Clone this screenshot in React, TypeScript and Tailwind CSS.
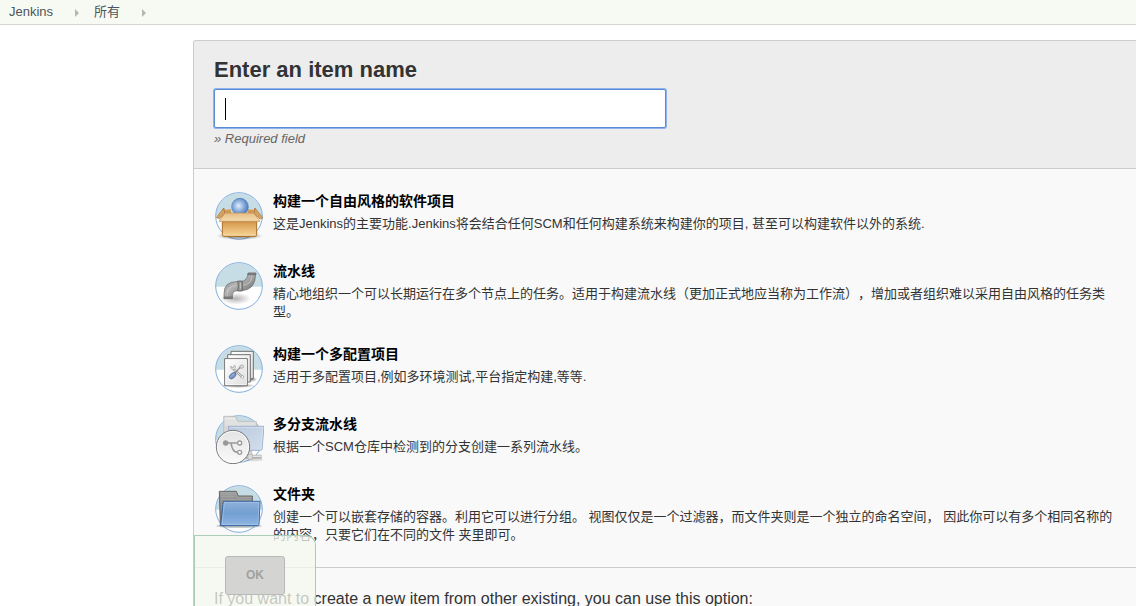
import { useState, type ReactNode } from 'react';

interface ItemType {
  id: string;
  name: string;
  description: string;
  icon: ReactNode;
}

function Disc({ cy, r = 70 }: { cy: number; r?: number }) {
  return (
    <>
      <circle cx="102" cy={cy} r={r} fill="#fff" />
      <path d={`M${102 - r} ${cy + 2}a${r} ${r} 0 0 1 ${r * 2} 0z`} fill="#c6dde5" />
      <circle cx="102" cy={cy} r={r} fill="none" stroke="#82aede" strokeWidth="3" />
    </>
  );
}

function FreestyleIcon() {
  return (
    <svg viewBox="27 33 150 150" className="size-[50px]" aria-hidden="true">
      <defs>
        <radialGradient id="ball" cx=".42" cy=".45" r=".6">
          <stop offset="0" stopColor="#e3eefa" />
          <stop offset=".5" stopColor="#8fb1dd" />
          <stop offset="1" stopColor="#4678b8" />
        </radialGradient>
        <linearGradient id="box" x2="0" y2="1">
          <stop offset="0" stopColor="#c2893f" />
          <stop offset=".3" stopColor="#dda65c" />
          <stop offset="1" stopColor="#f8d596" />
        </linearGradient>
        <linearGradient id="flap" x2="0" y2="1">
          <stop offset="0" stopColor="#e6bd85" />
          <stop offset="1" stopColor="#f6dcb4" />
        </linearGradient>
        <radialGradient id="boxShadow">
          <stop offset="0" stopColor="#000" stopOpacity=".6" />
          <stop offset="1" stopColor="#000" stopOpacity="0" />
        </radialGradient>
      </defs>
      <Disc cy={108} />
      <ellipse cx="104" cy="168" rx="70" ry="12" fill="url(#boxShadow)" />
      <path d="M56 84L34 113l10 3 17-17zM150 84l24 30-9 3-19-17z" fill="#d3a263" stroke="#b17a35" strokeWidth="2" />
      <path d="M56 85l4 14M150 85l-4 14" stroke="#a8712c" strokeWidth="3" />
      <path d="M58 90l20-2v12H60zM148 90l-20-2v12h18z" fill="#d09a59" />
      <circle cx="105" cy="80" r="25" fill="url(#ball)" stroke="#4779b9" strokeWidth="2" />
      <path d="M52 120h103v44q0 5-5 5H57q-5 0-5-5z" fill="url(#box)" stroke="#a96e22" strokeWidth="3" />
      <path d="M60 99h86l19 25H42z" fill="url(#flap)" stroke="#bd8a48" strokeWidth="2" />
      <path d="M55 165h97" stroke="#fff0c9" strokeWidth="2" opacity=".6" />
    </svg>
  );
}

function PipelineIcon() {
  return (
    <svg viewBox="27 33 150 150" className="size-[50px]" aria-hidden="true">
      <defs>
        <linearGradient id="pipe" x1="0" y1="0" x2="1" y2="1">
          <stop offset="0" stopColor="#777" />
          <stop offset=".4" stopColor="#b5b5b5" />
          <stop offset=".65" stopColor="#8f8f8f" />
          <stop offset="1" stopColor="#626262" />
        </linearGradient>
        <radialGradient id="pipeShadow">
          <stop offset="0" stopColor="#000" stopOpacity=".3" />
          <stop offset="1" stopColor="#000" stopOpacity="0" />
        </radialGradient>
      </defs>
      <Disc cy={108} />
      <ellipse cx="92" cy="146" rx="46" ry="18" fill="url(#pipeShadow)" />
      <path
        d="M57 145v-14q0-36 38-36h10q21 0 25-25h22q0 51-43 52H96q-13 0-14 12v11z"
        fill="url(#pipe)"
        stroke="#666"
        strokeWidth="2"
      />
      <path d="M67 140v-9q0-23 28-24M113 106q27-2 28-30" fill="none" stroke="#d2d2d2" strokeWidth="4" opacity=".5" />
      <path d="M129 69h24v5h-25zM57 141h25v5H57z" fill="#858585" stroke="#666" strokeWidth="2" />
      <path d="M98 93h14v30H98q4-15 0-30z" fill="#959595" stroke="#555" strokeWidth="2" />
      <path d="M106 98v18" stroke="#ccc" strokeWidth="3" />
    </svg>
  );
}

function MatrixIcon() {
  return (
    <svg viewBox="27 27 150 150" className="size-[50px]" aria-hidden="true">
      <defs>
        <linearGradient id="sheet" x2="1" y2="1">
          <stop offset="0" stopColor="#fff" />
          <stop offset="1" stopColor="#dedede" />
        </linearGradient>
        <radialGradient id="sheetShadow">
          <stop offset="0" stopColor="#000" stopOpacity=".5" />
          <stop offset="1" stopColor="#000" stopOpacity="0" />
        </radialGradient>
      </defs>
      <Disc cy={102} />
      <ellipse cx="100" cy="152" rx="53" ry="7" fill="url(#sheetShadow)" />
      <ellipse cx="139" cy="133" rx="18" ry="8" fill="url(#sheetShadow)" />
      <path d="M78 49h67v82H78z" fill="url(#sheet)" stroke="#707070" strokeWidth="3" />
      <path d="M68 59h68v82H68z" fill="url(#sheet)" stroke="#707070" strokeWidth="3" />
      <path d="M59 71h68v81H59z" fill="url(#sheet)" stroke="#707070" strokeWidth="3" />
      <path d="M62 74h62v75H62z" fill="none" stroke="#fff" strokeWidth="2" />
      <path d="M84 101l27 24" stroke="#999" strokeWidth="7" strokeLinecap="round" />
      <path d="M84 101l27 24" stroke="#e7e7e7" strokeWidth="3" strokeLinecap="round" />
      <path d="M78 93q-4 9 4 11t9-6-4-7l-1 7-5 1z" fill="#eee" stroke="#999" strokeWidth="2" />
      <circle cx="112" cy="126" r="4" fill="#fff" stroke="#999" strokeWidth="2" />
      <path d="M86 117l20-20" stroke="#909090" strokeWidth="4" />
      <path d="M104 93l7-4 5 4-2 6-7 1z" fill="#ddd" stroke="#999" strokeWidth="2" />
      <ellipse cx="83" cy="122" rx="12" ry="7" transform="rotate(-42 83 122)" fill="#7d98c6" stroke="#405f95" strokeWidth="2" />
      <path d="M77 125l10-9" stroke="#b7c8e5" strokeWidth="2" />
    </svg>
  );
}

function MultibranchIcon() {
  return (
    <svg viewBox="27 27 150 150" className="size-[50px]" aria-hidden="true">
      <defs>
        <linearGradient id="screen" x2="1" y2="1">
          <stop offset="0" stopColor="#b9c9df" />
          <stop offset="1" stopColor="#d3deec" />
        </linearGradient>
        <linearGradient id="badge" x2="0" y2="1">
          <stop offset="0" stopColor="#e3e3e3" />
          <stop offset="1" stopColor="#fafafa" />
        </linearGradient>
      </defs>
      <Disc cy={102} />
      <path d="M56 34h36l7 15h52q4 0 4 4v56H56z" fill="#d8d8d8" stroke="#b5b5b5" strokeWidth="2" />
      <path d="M60 38h30l7 15h54v8H60z" fill="#efefef" />
      <path d="M60 45h32M60 51h34M60 57h92" stroke="#c5c5c5" strokeWidth="2" />
      <ellipse cx="140" cy="164" rx="34" ry="5" fill="#000" opacity=".12" />
      <path d="M128 138h12v12h-12z" fill="#ddd" stroke="#aaa" strokeWidth="2" />
      <path d="M70 64h107l-6 69q-1 3-4 3H78z" fill="url(#screen)" stroke="#9db0cc" strokeWidth="3" />
      <path d="M74 67h99l-4 64" fill="none" stroke="#dde7f4" strokeWidth="2" />
      <path d="M112 155h58" stroke="#999" strokeWidth="11" />
      <path d="M112 154h58" stroke="#e4e4e4" strokeWidth="6" />
      <path d="M129 148h13v15h-13z" fill="#ddd" stroke="#aaa" strokeWidth="2" />
      <circle cx="84" cy="126" r="50" fill="url(#badge)" stroke="#777" strokeWidth="3" />
      <circle cx="84" cy="126" r="47" fill="none" stroke="#fff" strokeWidth="2" />
      <path d="M62 114h36M78 114q4 28 20 28" fill="none" stroke="#999" strokeWidth="5" />
      <circle cx="62" cy="114" r="8" fill="#999" />
      <circle cx="104" cy="114" r="6" fill="#fff" stroke="#999" strokeWidth="4" />
      <circle cx="104" cy="142" r="6" fill="#fff" stroke="#999" strokeWidth="4" />
    </svg>
  );
}

function FolderIcon() {
  return (
    <svg viewBox="27 27 150 150" className="size-[50px]" aria-hidden="true">
      <defs>
        <linearGradient id="folderBack" x2="0" y2="1">
          <stop offset="0" stopColor="#9c9c9c" />
          <stop offset="1" stopColor="#6f6f6f" />
        </linearGradient>
        <linearGradient id="folderFront" x2="0" y2="1">
          <stop offset="0" stopColor="#8fb1db" />
          <stop offset=".5" stopColor="#739fd1" />
          <stop offset="1" stopColor="#8fb5e2" />
        </linearGradient>
      </defs>
      <Disc cy={102} />
      <ellipse cx="102" cy="153" rx="68" ry="6" fill="#000" opacity=".2" />
      <path d="M43 49h51l6 14h42v89H46z" fill="url(#folderBack)" stroke="#666" strokeWidth="3" />
      <path d="M47 53h44l6 14h42M48 59h40M48 65h42M48 73h90M48 81h8M48 89h7M48 97h6M48 105h5" fill="none" stroke="#c2c2c2" strokeWidth="2" opacity=".5" />
      <path d="M55 79h110l-3 69q0 4-4 4H47z" fill="url(#folderFront)" stroke="#3465a4" strokeWidth="3" />
      <path d="M58 82h104l-3 66H51z" fill="none" stroke="#b6cff0" strokeWidth="2" opacity=".8" />
    </svg>
  );
}

const ITEM_TYPES: ItemType[] = [
  {
    id: 'freestyle',
    name: '构建一个自由风格的软件项目',
    description: '这是Jenkins的主要功能.Jenkins将会结合任何SCM和任何构建系统来构建你的项目, 甚至可以构建软件以外的系统.',
    icon: <FreestyleIcon />,
  },
  {
    id: 'pipeline',
    name: '流水线',
    description:
      '精心地组织一个可以长期运行在多个节点上的任务。适用于构建流水线（更加正式地应当称为工作流），增加或者组织难以采用自由风格的任务类型。',
    icon: <PipelineIcon />,
  },
  {
    id: 'matrix',
    name: '构建一个多配置项目',
    description: '适用于多配置项目,例如多环境测试,平台指定构建,等等.',
    icon: <MatrixIcon />,
  },
  {
    id: 'multibranch',
    name: '多分支流水线',
    description: '根据一个SCM仓库中检测到的分支创建一系列流水线。',
    icon: <MultibranchIcon />,
  },
  {
    id: 'folder',
    name: '文件夹',
    description:
      '创建一个可以嵌套存储的容器。利用它可以进行分组。 视图仅仅是一个过滤器，而文件夹则是一个独立的命名空间， 因此你可以有多个相同名称的的内容，只要它们在不同的文件 夹里即可。',
    icon: <FolderIcon />,
  },
];

function Chevron() {
  return (
    <svg viewBox="0 0 4 8" className="mt-px h-2 w-1 fill-[#b5b5b5]" aria-hidden="true">
      <path d="M0 0l4 4-4 4z" />
    </svg>
  );
}

export default function App() {
  const [name, setName] = useState('');

  return (
    <div className="flex h-screen flex-col overflow-hidden bg-white font-['Liberation_Sans','Noto_Sans_CJK_SC',sans-serif] text-[13px] leading-[18px] text-[#333] [text-spacing-trim:space-all]">
      {/* Breadcrumbs */}
      <nav className="flex h-[25px] shrink-0 items-center border-b border-[#d3d7cf] bg-[#f6faf2] pl-[9px] text-[#4d545d]">
        <a href="#jenkins" className="mr-[22px]">Jenkins</a>
        <Chevron />
        <a href="#all" className="mr-[22px] ml-[15px]">所有</a>
        <Chevron />
      </nav>

      <main className="relative mt-[15px] ml-[193px] min-h-0 flex-1">
        <form id="create-item" className="h-full overflow-hidden rounded-tl-[3px] border-t border-l border-[#ccc] bg-[#f9f9f9]" onSubmit={(e) => e.preventDefault()}>
          {/* Item name */}
          <div className="h-32 border-b border-[#ccc] bg-[#ededed] px-5 pt-[17px]">
            <label htmlFor="name" className="block text-[22px] leading-6 font-bold">
              Enter an item name
            </label>
            <div className="relative mt-[7px] max-w-[452px]">
              <input
                id="name"
                type="text"
                value={name}
                onChange={(e) => setName(e.target.value)}
                className="block h-[39px] w-full rounded-xs border border-[#5c8bd6] bg-white px-[11px] text-lg caret-transparent ring-1 ring-[#8fb3ee] outline-none"
              />
              {name === '' && <span className="absolute top-[9px] left-[11px] h-[22px] w-px bg-black" />}
            </div>
            <div className="mt-0.5 text-[#666] italic">» Required field</div>
          </div>

          {/* Item types */}
          <ul className="border-b border-[#ccc] px-5 pt-3 pb-[10px]">
            {ITEM_TYPES.map((item) => (
              <li key={item.id} className="flex gap-[9px] py-[10px]">
                <div className="shrink-0">{item.icon}</div>
                <div className="pt-px pb-[3px]">
                  <h2 className="mb-[5px] text-sm leading-[18px] font-bold text-black">{item.name}</h2>
                  <p>{item.description}</p>
                </div>
              </li>
            ))}
          </ul>

          <p className="px-5 pt-[21px] text-base leading-5">
            If you want to create a new item from other existing, you can use this option:
          </p>
        </form>

        {/* Submit bar */}
        <div className="absolute bottom-0 left-px rounded-tr-[10px] border-t border-r border-l border-[#a9cdb9] bg-[#f4f8ef]/75 px-[30px] pt-5 pb-[11px]">
          <button
            type="submit"
            form="create-item"
            disabled={name === ''}
            className="block h-[39px] w-[60px] rounded-[3px] border border-[#b9bab7] bg-[#d4d5d2] pb-0.5 text-xs font-bold text-[#a0a19f]"
          >
            OK
          </button>
        </div>
      </main>
    </div>
  );
}
